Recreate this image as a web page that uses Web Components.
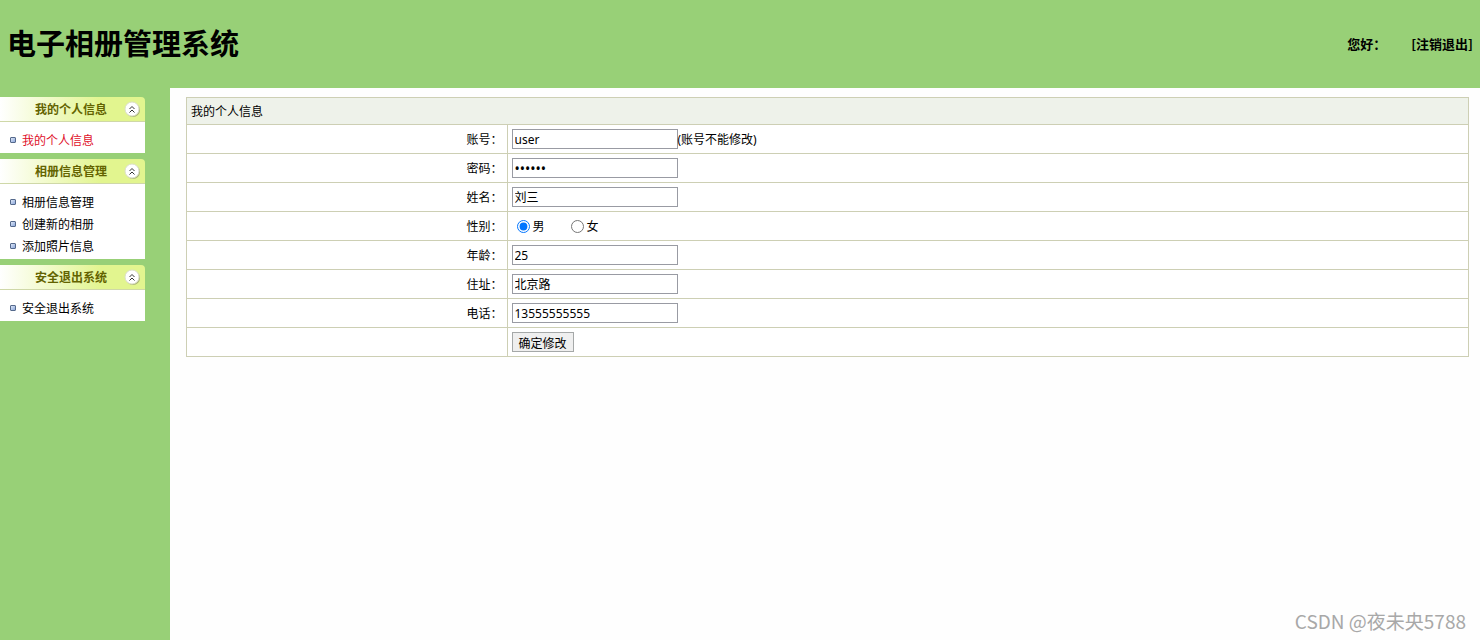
<!DOCTYPE html>
<html lang="zh-CN">
<head>
<meta charset="utf-8">
<title>电子相册管理系统</title>
<style>
	html, body {
		height: 100%;
	}

	body {
		margin: 0;
		font: 12px/18px "Noto Sans", "Noto Sans CJK SC", sans-serif;
		color: #000;
	}
</style>
</head>
<body>

<album-layout>
	<album-header slot="header" heading="电子相册管理系统">
		<span>您好：</span>
		<a href="#logout">[注销退出]</a>
	</album-header>

	<menu-group slot="menu" heading="我的个人信息">
		<menu-link href="#profile" current>我的个人信息</menu-link>
	</menu-group>
	<menu-group slot="menu" heading="相册信息管理">
		<menu-link href="#albums">相册信息管理</menu-link>
		<menu-link href="#new-album">创建新的相册</menu-link>
		<menu-link href="#add-photo">添加照片信息</menu-link>
	</menu-group>
	<menu-group slot="menu" heading="安全退出系统">
		<menu-link href="#exit">安全退出系统</menu-link>
	</menu-group>

	<profile-form></profile-form>
	<corner-mark slot="mark">CSDN @夜未央5788</corner-mark>
</album-layout>

<script>
function createTemplate (html) {
	const template = document.createElement("template");
	template.innerHTML = html;
	return template;
}

/** Attaches a shadow root with a copy of the template */
class BaseElement extends HTMLElement {
	constructor () {
		super();
		const shadow = this.attachShadow({mode: "open"});
		shadow.appendChild(this.constructor.template.content.cloneNode(true));
	}
}

class AlbumLayout extends BaseElement {
	static template = createTemplate(`
		<style>
			:host {
				display: grid;
				grid-template: auto 1fr / 170px 1fr;
				min-height: 100%;
				background: #98d077;
				position: relative;
			}

			header {
				grid-column: 1 / -1;
			}

			nav {
				display: flex;
				flex-direction: column;
				gap: 6px;
				padding: 9px 25px 9px 0;
			}

			main {
				padding: 9px 11px 9px 16px;
				background: #fefefe;
			}
		</style>
		<header><slot name="header"></slot></header>
		<nav><slot name="menu"></slot></nav>
		<main><slot></slot></main>
		<slot name="mark"></slot>
	`);
}

class AlbumHeader extends BaseElement {
	static template = createTemplate(`
		<style>
			:host {
				display: flex;
				align-items: center;
				justify-content: space-between;
				height: 88px;
				padding: 0 7px;
				box-sizing: border-box;
			}

			h1 {
				margin: 0;
				padding-bottom: 4px;
				font: bold 29px/40px "Noto Sans CJK SC", sans-serif;
			}

			.user {
				display: flex;
				gap: 25px;
				font: bold 13px/18px "Noto Sans CJK SC", sans-serif;
			}

			::slotted(a) {
				color: inherit;
				text-decoration: none;
			}
		</style>
		<h1></h1>
		<div class="user"><slot></slot></div>
	`);

	connectedCallback () {
		this.shadowRoot.querySelector("h1").textContent = this.getAttribute("heading");
	}
}

class MenuGroup extends BaseElement {
	static template = createTemplate(`
		<style>
			:host {
				display: block;
			}

			h2 {
				margin: 0;
				font: inherit;
			}

			button {
				display: flex;
				align-items: center;
				width: 100%;
				height: 25px;
				padding: 0 4px 0 35px;
				border: 0;
				border-bottom: 1px solid #cfd8a8;
				border-radius: 0 4px 0 0;
				background: linear-gradient(90deg, #fff, #e2f58f 70%);
				font: bold 12px/18px "Noto Sans CJK SC", sans-serif;
				color: #636300;
				cursor: pointer;
			}

			svg {
				margin-left: auto;
			}

			.items {
				padding: 7px 0 2px;
				background: #fff;
			}

			:host([collapsed]) .items {
				display: none;
			}

			:host([collapsed]) .arrows {
				transform: rotate(180deg);
				transform-origin: 8px 8px;
			}
		</style>
		<h2>
			<button type="button" aria-expanded="true">
				<span></span>
				<svg width="17" height="17" viewBox="0 0 17 17" fill="none" aria-hidden="true">
					<circle cx="9" cy="9" r="7" fill="#aab574"/>
					<circle cx="8" cy="8" r="7" fill="#fff" stroke="#dcdfc9"/>
					<path class="arrows" d="M5.500 8l2.500-2.500 2.500 2.500M5.500 11.500l2.500-2.500 2.500 2.500" stroke="#333"/>
				</svg>
			</button>
		</h2>
		<div class="items"><slot></slot></div>
	`);

	connectedCallback () {
		const button = this.shadowRoot.querySelector("button");
		button.querySelector("span").textContent = this.getAttribute("heading");

		button.onclick = () => {
			const collapsed = this.toggleAttribute("collapsed");
			button.setAttribute("aria-expanded", !collapsed);
		};
	}
}

class MenuLink extends BaseElement {
	static template = createTemplate(`
		<style>
			:host {
				display: block;
			}

			a {
				display: flex;
				align-items: center;
				gap: 6px;
				height: 22px;
				padding-left: 10px;
				color: #000;
				text-decoration: none;
			}

			:host([current]) a {
				color: #e0102a;
			}

			a::before {
				content: "";
				width: 6px;
				height: 6px;
				border: 1px solid #55698c;
				border-radius: 1px;
				box-sizing: border-box;
				background: linear-gradient(135deg, #dce6f5, #8ea9dc);
			}

			span {
				padding-top: 2px;
			}
		</style>
		<a><span><slot></slot></span></a>
	`);

	connectedCallback () {
		this.shadowRoot.querySelector("a").href = this.getAttribute("href");
	}
}

class ProfileForm extends BaseElement {
	static template = createTemplate(`
		<style>
			:host {
				display: block;
			}

			form {
				margin: 0;
			}

			table {
				width: 100%;
				border-collapse: collapse;
				table-layout: fixed;
				background: #fff;
			}

			col:first-child {
				width: 25%;
			}

			th, td {
				height: 28px;
				padding: 0 4px;
				border: 1px solid #cdcfb4;
				font-weight: normal;
				text-align: left;
			}

			th {
				height: 26px;
				padding-top: 2px;
			}

			thead th {
				height: 24px;
				background: #eef2ea;
			}

			tbody th {
				text-align: right;
			}

			.field {
				display: flex;
				align-items: center;
			}

			.field span, .field label {
				padding-top: 2px;
			}

			.field input:not([type="radio"]) {
				width: 166px;
				height: 20px;
				padding: 1px 2px;
				border: 1px solid #999ba3;
				box-sizing: border-box;
				background: #fff;
				font: inherit;
				color: #000;
			}

			.field input[type="password"] {
				font-size: 14px;
			}

			input[type="radio"] {
				width: 13px;
				height: 13px;
				margin: 0 3px 0 5px;
			}

			.field label + input {
				margin-left: 26px;
			}

			button {
				height: 20px;
				padding: 2px 6px 0;
				border: 1px solid #a5a8a8;
				background: #efefef;
				font: inherit;
				color: #000;
			}
		</style>
		<form>
			<table>
				<colgroup><col><col></colgroup>
				<thead>
					<tr><th colspan="2">我的个人信息</th></tr>
				</thead>
				<tbody>
					<tr>
						<th scope="row"><label for="account">账号：</label></th>
						<td><div class="field"><input id="account" type="text" value="user" readonly><span>(账号不能修改)</span></div></td>
					</tr>
					<tr>
						<th scope="row"><label for="password">密码：</label></th>
						<td><div class="field"><input id="password" type="password" value="123456"></div></td>
					</tr>
					<tr>
						<th scope="row"><label for="name">姓名：</label></th>
						<td><div class="field"><input id="name" type="text" value="刘三"></div></td>
					</tr>
					<tr>
						<th scope="row" id="sex">性别：</th>
						<td>
							<div class="field" role="radiogroup" aria-labelledby="sex">
								<input id="male" type="radio" name="sex" checked><label for="male">男</label>
								<input id="female" type="radio" name="sex"><label for="female">女</label>
							</div>
						</td>
					</tr>
					<tr>
						<th scope="row"><label for="age">年龄：</label></th>
						<td><div class="field"><input id="age" type="text" value="25"></div></td>
					</tr>
					<tr>
						<th scope="row"><label for="address">住址：</label></th>
						<td><div class="field"><input id="address" type="text" value="北京路"></div></td>
					</tr>
					<tr>
						<th scope="row"><label for="phone">电话：</label></th>
						<td><div class="field"><input id="phone" type="text" value="13555555555"></div></td>
					</tr>
					<tr>
						<td></td>
						<td><div class="field"><button type="submit">确定修改</button></div></td>
					</tr>
				</tbody>
			</table>
		</form>
	`);

	connectedCallback () {
		this.shadowRoot.querySelector("form").onsubmit = event => event.preventDefault();
	}
}

class CornerMark extends BaseElement {
	static template = createTemplate(`
		<style>
			:host {
				position: absolute;
				right: 14px;
				bottom: 6px;
				font: 19px/26px "Noto Sans CJK SC", sans-serif;
				color: #a8a8a8;
				pointer-events: none;
			}
		</style>
		<slot></slot>
	`);
}

customElements.define("album-layout", AlbumLayout);
customElements.define("album-header", AlbumHeader);
customElements.define("menu-group", MenuGroup);
customElements.define("menu-link", MenuLink);
customElements.define("profile-form", ProfileForm);
customElements.define("corner-mark", CornerMark);
</script>
</body>
</html>
